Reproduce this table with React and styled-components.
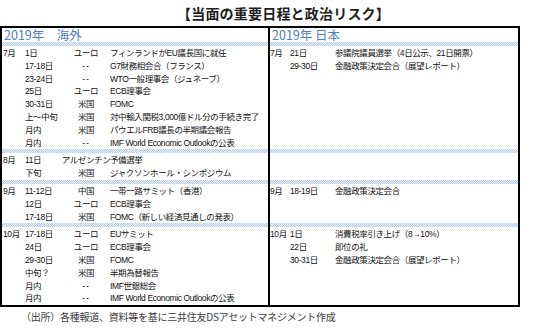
import React from "react";
import styled, { createGlobalStyle } from "styled-components";

const GlobalStyle = createGlobalStyle`
  body {
    margin: 0;
    background: #fff;
    font-family: "Liberation Sans", "Noto Sans CJK JP", sans-serif;
    color: #111;
  }
`;

const Page = styled.div`
  width: 539px;
  height: 330px;
  overflow: hidden;
`;

const Title = styled.h1`
  margin: 0;
  height: 26px;
  padding-left: 177px;
  font-family: "Noto Sans CJK JP", sans-serif;
  font-size: 14px;
  font-weight: 700;
  line-height: 27px;
  letter-spacing: 0.2px;
  color: #1e1e1e;
`;

const Box = styled.div`
  box-sizing: border-box;
  width: 520px;
  border: 2px solid #000;
  display: grid;
  grid-template-columns: 266px 250px;
`;

const Cell = styled.div`
  border-left: ${(p) => (p.$right ? "2px solid #000" : "none")};
`;

const Header = styled(Cell)`
  height: 14px;
  padding-left: 2px;
  font-family: "Noto Sans CJK JP", sans-serif;
  font-size: 12.5px;
  line-height: 13px;
  color: #4f81bd;
  white-space: pre;
`;

const Band = styled(Cell)`
  height: 4px;
  background: repeating-conic-gradient(#b4cce8 0 25%, #e8f0fa 0 50%) 0 0 / 2px 2px;
`;

const Section = styled(Cell)`
  display: flex;
  padding-top: 1px;
  padding-left: ${(p) => (p.$right ? "0" : "1px")};
`;

const Month = styled.div`
  width: ${(p) => (p.$right ? "20px" : "22px")};
  flex: none;
  font-size: 8.5px;
  line-height: 12.8px;
  letter-spacing: -0.4px;
`;

const Rows = styled.div`
  flex: 1;
`;

const Row = styled.div`
  display: grid;
  grid-template-columns: ${(p) => (p.$right ? "45px 1fr" : "37px 48px 1fr")};
  font-size: 8.5px;
  line-height: 12.8px;
  height: 12.8px;
  letter-spacing: -0.4px;
  white-space: nowrap;
`;

const Country = styled.span`
  display: flex;
  justify-content: center;
  letter-spacing: ${(p) => (p.$dash ? "1px" : "-0.4px")};
`;

const Footer = styled.div`
  padding: 2px 0 0 21px;
  font-family: "Noto Sans CJK JP", sans-serif;
  font-size: 10px;
  line-height: 16px;
  letter-spacing: -0.25px;
  color: #404040;
`;

const overseas = [
  {
    month: "7月",
    rows: [
      ["1日", "ユーロ", "フィンランドがEU議長国に就任"],
      ["17-18日", "--", "G7財務相会合（フランス）"],
      ["23-24日", "--", "WTO一般理事会（ジュネーブ）"],
      ["25日", "ユーロ", "ECB理事会"],
      ["30-31日", "米国", "FOMC"],
      ["上～中旬", "米国", "対中輸入関税3,000億ドル分の手続き完了"],
      ["月内", "米国", "パウエルFRB議長の半期議会報告"],
      ["月内", "--", "IMF World Economic Outlookの公表"],
    ],
  },
  {
    month: "8月",
    rows: [
      ["11日", "アルゼンチン", "予備選挙"],
      ["下旬", "米国", "ジャクソンホール・シンポジウム"],
    ],
  },
  {
    month: "9月",
    rows: [
      ["11-12日", "中国", "一帯一路サミット（香港）"],
      ["12日", "ユーロ", "ECB理事会"],
      ["17-18日", "米国", "FOMC（新しい経済見通しの発表）"],
    ],
  },
  {
    month: "10月",
    rows: [
      ["17-18日", "ユーロ", "EUサミット"],
      ["24日", "ユーロ", "ECB理事会"],
      ["29-30日", "米国", "FOMC"],
      ["中旬？", "米国", "半期為替報告"],
      ["月内", "--", "IMF世銀総会"],
      ["月内", "--", "IMF World Economic Outlookの公表"],
    ],
  },
];

const japan = [
  {
    month: "7月",
    rows: [
      ["21日", "参議院議員選挙（4日公示、21日開票）"],
      ["29-30日", "金融政策決定会合（展望レポート）"],
    ],
  },
  { month: "", rows: [] },
  { month: "9月", rows: [["18-19日", "金融政策決定会合"]] },
  {
    month: "10月",
    rows: [
      ["1日", "消費税率引き上げ（8→10%）"],
      ["22日", "即位の礼"],
      ["30-31日", "金融政策決定会合（展望レポート）"],
    ],
  },
];

export default function App() {
  return (
    <Page>
      <GlobalStyle />
      <Title>【当面の重要日程と政治リスク】</Title>
      <Box>
        <Header>2019年　海外</Header>
        <Header $right>2019年 日本</Header>
        {overseas.map((sec, i) => (
          <React.Fragment key={i}>
            <Band />
            <Band $right />
            <Section>
              <Month>{sec.month}</Month>
              <Rows>
                {sec.rows.map(([date, country, event], j) => (
                  <Row key={j}>
                    <span>{date}</span>
                    <Country $dash={country === "--"}>{country}</Country>
                    <span>{event}</span>
                  </Row>
                ))}
              </Rows>
            </Section>
            <Section $right>
              <Month $right>{japan[i].month}</Month>
              <Rows>
                {japan[i].rows.map(([date, event], j) => (
                  <Row $right key={j}>
                    <span>{date}</span>
                    <span>{event}</span>
                  </Row>
                ))}
              </Rows>
            </Section>
          </React.Fragment>
        ))}
      </Box>
      <Footer>（出所）各種報道、資料等を基に三井住友DSアセットマネジメント作成</Footer>
    </Page>
  );
}
